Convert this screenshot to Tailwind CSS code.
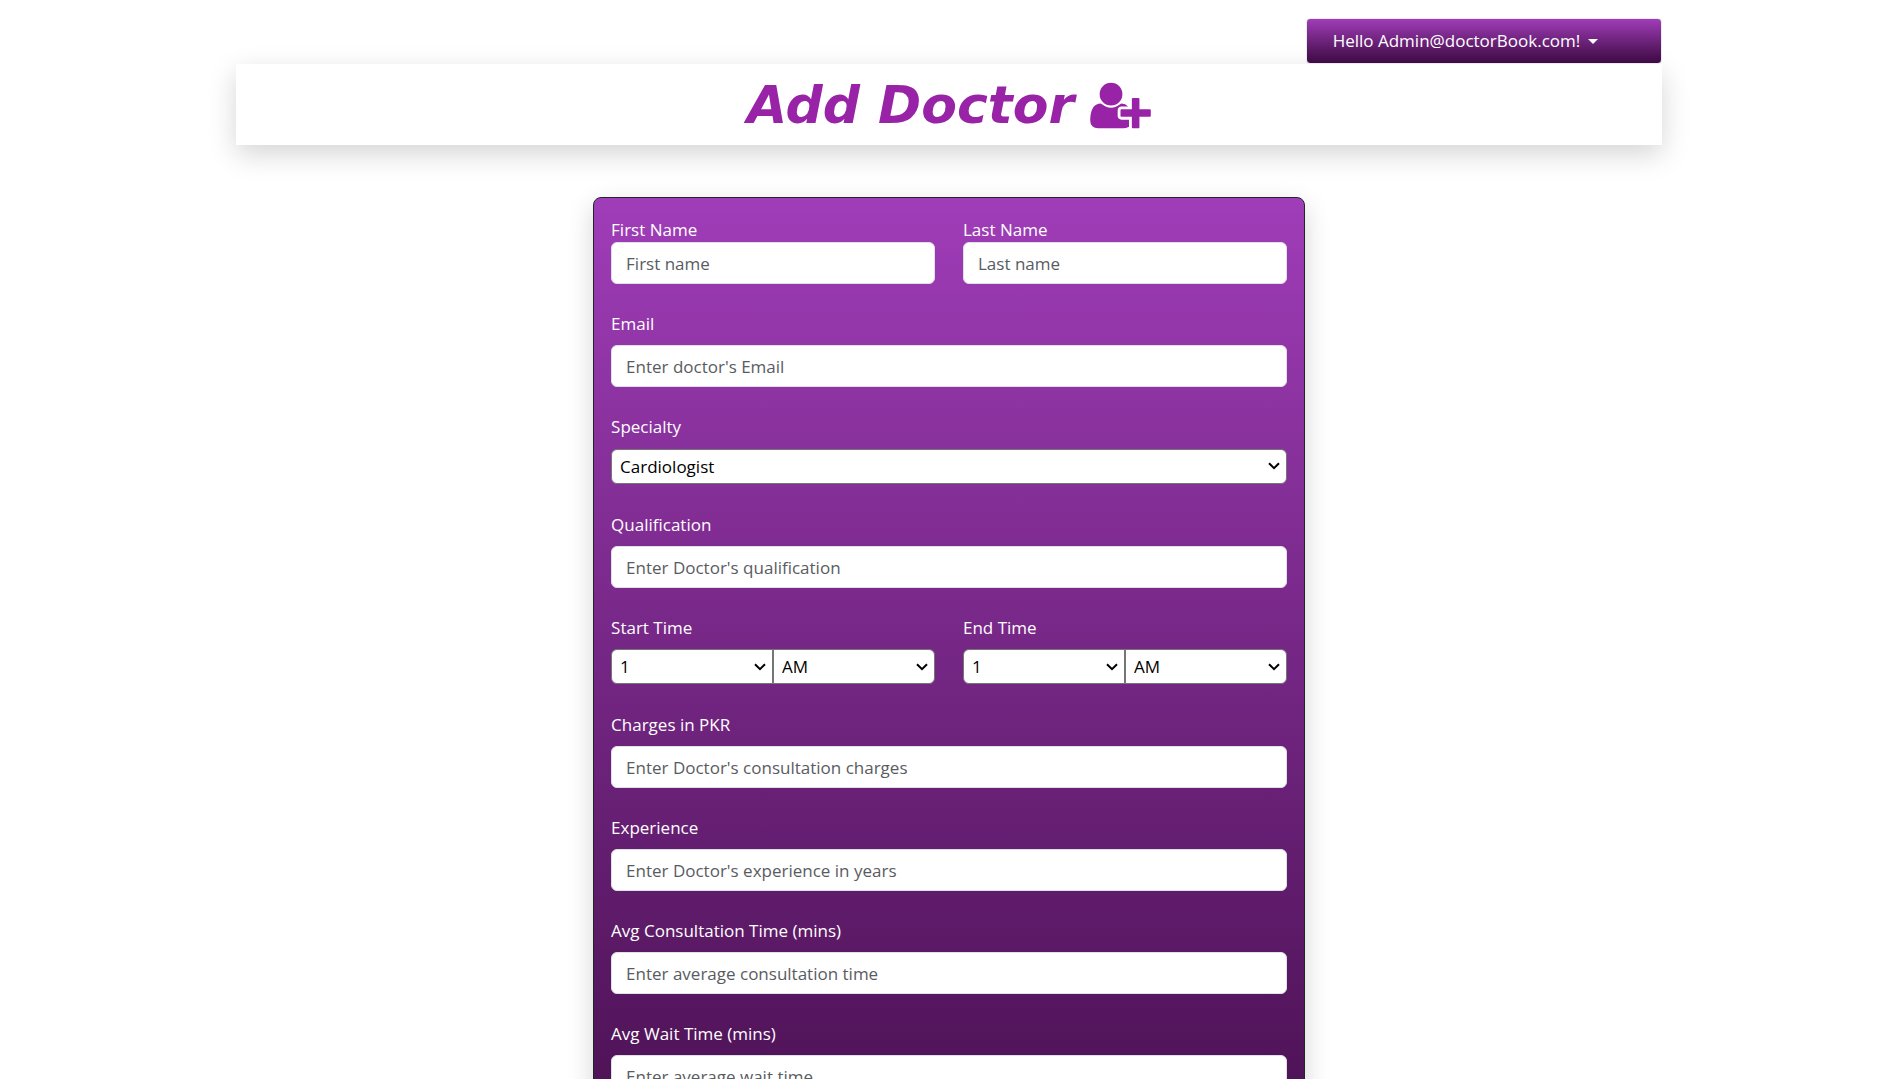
<!DOCTYPE html>
<html lang="en">
<head>
<meta charset="utf-8">
<meta name="viewport" content="width=device-width, initial-scale=1">
<title>Add Doctor</title>
<script src="https://cdn.jsdelivr.net/npm/@tailwindcss/browser@4"></script>
</head>
<body class="h-screen overflow-hidden bg-white pl-[3px] font-['Segoe_UI','Open_Sans',sans-serif] text-[17px] leading-[28px] text-white">
<div class="mx-auto w-[75.4%]">
  <header class="flex justify-end pt-[18px]">
    <button type="button" class="flex h-[46px] w-1/4 items-center rounded-[4px] border border-[#e9ecef] bg-linear-to-b from-[#a03db9] to-[#3e0a43] pl-[26px]">
      Hello Admin@doctorBook.com!
      <span class="ml-2 border-x-[5px] border-t-[5px] border-x-transparent border-t-white"></span>
    </button>
  </header>
  <h1 class="flex h-[81px] items-center justify-center gap-4 bg-white pt-px font-['DejaVu_Sans',sans-serif] text-[52px] font-bold italic text-[#9823a7] shadow-[0_9px_26px_rgba(0,0,0,0.17)]">
    Add Doctor
    <svg class="h-[53px] w-[61px]" viewBox="0 0 2048 1792" fill="currentColor" aria-hidden="true"><path d="M704 896q-159 0-271.5-112.5t-112.5-271.5 112.5-271.5 271.5-112.5 271.5 112.5 112.5 271.5-112.5 271.5-271.5 112.5zm960 128h352q13 0 22.5 9.5t9.5 22.5v192q0 13-9.5 22.5t-22.5 9.5h-352v352q0 13-9.5 22.5t-22.5 9.5h-192q-13 0-22.5-9.5t-9.5-22.5v-352h-352q-13 0-22.5-9.5t-9.5-22.5v-192q0-13 9.5-22.5t22.5-9.5h352v-352q0-13 9.5-22.5t22.5-9.5h192q13 0 22.5 9.5t9.5 22.5v352zm-736 224q0 52 38 90t90 38h256v238q-68 50-171 50h-874q-121 0-194-69t-73-190q0-53 3.5-103.5t14-109 26.5-108.5 43-97.5 62-81 85.5-53.5 111.5-20q19 0 39 17 79 61 154.5 91.5t164.5 30.5 164.5-30.5 154.5-91.5q20-17 39-17 132 0 217 96h-223q-52 0-90 38t-38 90v192z"/></svg>
  </h1>
  <form class="mx-auto mt-[52px] flex w-[49.9%] flex-col gap-[26px] rounded-lg border border-[#212529] bg-linear-to-b from-[#a03db9] to-[#3e0a43] px-[17px] pt-[20px] pb-[190px] shadow-[0_9px_26px_rgba(0,0,0,0.17)]">
    <div class="grid grid-cols-2 gap-[28px]">
      <div class="flex flex-col">
        <label for="first" class="leading-[24px]">First Name</label>
        <input id="first" type="text" placeholder="First name" class="h-[42px] w-full rounded-md border border-[#dee2e6] bg-white px-[14px] text-[#212529] placeholder:text-[#595c5f]">
      </div>
      <div class="flex flex-col">
        <label for="last" class="leading-[24px]">Last Name</label>
        <input id="last" type="text" placeholder="Last name" class="h-[42px] w-full rounded-md border border-[#dee2e6] bg-white px-[14px] text-[#212529] placeholder:text-[#595c5f]">
      </div>
    </div>
    <div class="flex flex-col gap-[7px]">
      <label for="email">Email</label>
      <input id="email" type="email" placeholder="Enter doctor's Email" class="h-[42px] w-full rounded-md border border-[#dee2e6] bg-white px-[14px] text-[#212529] placeholder:text-[#595c5f]">
    </div>
    <div class="flex flex-col gap-[7px]">
      <label for="specialty">Specialty</label>
      <div class="relative flex py-px">
        <select id="specialty" class="h-[35px] w-full appearance-none rounded-md border border-[#767676] bg-white px-2 text-black"><option>Cardiologist</option></select>
        <svg class="pointer-events-none absolute top-[14px] right-[7px] h-2 w-3" viewBox="0 0 12 8" fill="none" stroke="black" stroke-width="2" aria-hidden="true"><path d="M1 1.200 6 6.200 11 1.200"/></svg>
      </div>
    </div>
    <div class="flex flex-col gap-[7px]">
      <label for="qualification">Qualification</label>
      <input id="qualification" type="text" placeholder="Enter Doctor's qualification" class="h-[42px] w-full rounded-md border border-[#dee2e6] bg-white px-[14px] text-[#212529] placeholder:text-[#595c5f]">
    </div>
    <div class="grid grid-cols-2 gap-[28px]">
      <div class="flex flex-col gap-[7px]">
        <label for="start">Start Time</label>
        <div class="flex pb-px">
          <div class="relative w-1/2">
            <select id="start" class="h-[35px] w-full appearance-none rounded-l-md border border-[#767676] bg-white px-2 text-black"><option>1</option></select>
            <svg class="pointer-events-none absolute top-[14px] right-[7px] h-2 w-3" viewBox="0 0 12 8" fill="none" stroke="black" stroke-width="2" aria-hidden="true"><path d="M1 1.200 6 6.200 11 1.200"/></svg>
          </div>
          <div class="relative w-1/2">
            <select aria-label="Start time AM or PM" class="h-[35px] w-full appearance-none rounded-r-md border border-[#767676] bg-white px-2 text-black"><option>AM</option><option>PM</option></select>
            <svg class="pointer-events-none absolute top-[14px] right-[7px] h-2 w-3" viewBox="0 0 12 8" fill="none" stroke="black" stroke-width="2" aria-hidden="true"><path d="M1 1.200 6 6.200 11 1.200"/></svg>
          </div>
        </div>
      </div>
      <div class="flex flex-col gap-[7px]">
        <label for="end">End Time</label>
        <div class="flex pb-px">
          <div class="relative w-1/2">
            <select id="end" class="h-[35px] w-full appearance-none rounded-l-md border border-[#767676] bg-white px-2 text-black"><option>1</option></select>
            <svg class="pointer-events-none absolute top-[14px] right-[7px] h-2 w-3" viewBox="0 0 12 8" fill="none" stroke="black" stroke-width="2" aria-hidden="true"><path d="M1 1.200 6 6.200 11 1.200"/></svg>
          </div>
          <div class="relative w-1/2">
            <select aria-label="End time AM or PM" class="h-[35px] w-full appearance-none rounded-r-md border border-[#767676] bg-white px-2 text-black"><option>AM</option><option>PM</option></select>
            <svg class="pointer-events-none absolute top-[14px] right-[7px] h-2 w-3" viewBox="0 0 12 8" fill="none" stroke="black" stroke-width="2" aria-hidden="true"><path d="M1 1.200 6 6.200 11 1.200"/></svg>
          </div>
        </div>
      </div>
    </div>
    <div class="flex flex-col gap-[7px]">
      <label for="charges">Charges in PKR</label>
      <input id="charges" type="text" placeholder="Enter Doctor's consultation charges" class="h-[42px] w-full rounded-md border border-[#dee2e6] bg-white px-[14px] text-[#212529] placeholder:text-[#595c5f]">
    </div>
    <div class="flex flex-col gap-[7px]">
      <label for="experience">Experience</label>
      <input id="experience" type="text" placeholder="Enter Doctor's experience in years" class="h-[42px] w-full rounded-md border border-[#dee2e6] bg-white px-[14px] text-[#212529] placeholder:text-[#595c5f]">
    </div>
    <div class="flex flex-col gap-[7px]">
      <label for="consultation">Avg Consultation Time (mins)</label>
      <input id="consultation" type="text" placeholder="Enter average consultation time" class="h-[42px] w-full rounded-md border border-[#dee2e6] bg-white px-[14px] text-[#212529] placeholder:text-[#595c5f]">
    </div>
    <div class="flex flex-col gap-[7px]">
      <label for="wait">Avg Wait Time (mins)</label>
      <input id="wait" type="text" placeholder="Enter average wait time" class="h-[42px] w-full rounded-md border border-[#dee2e6] bg-white px-[14px] text-[#212529] placeholder:text-[#595c5f]">
    </div>
  </form>
</div>
</body>
</html>
